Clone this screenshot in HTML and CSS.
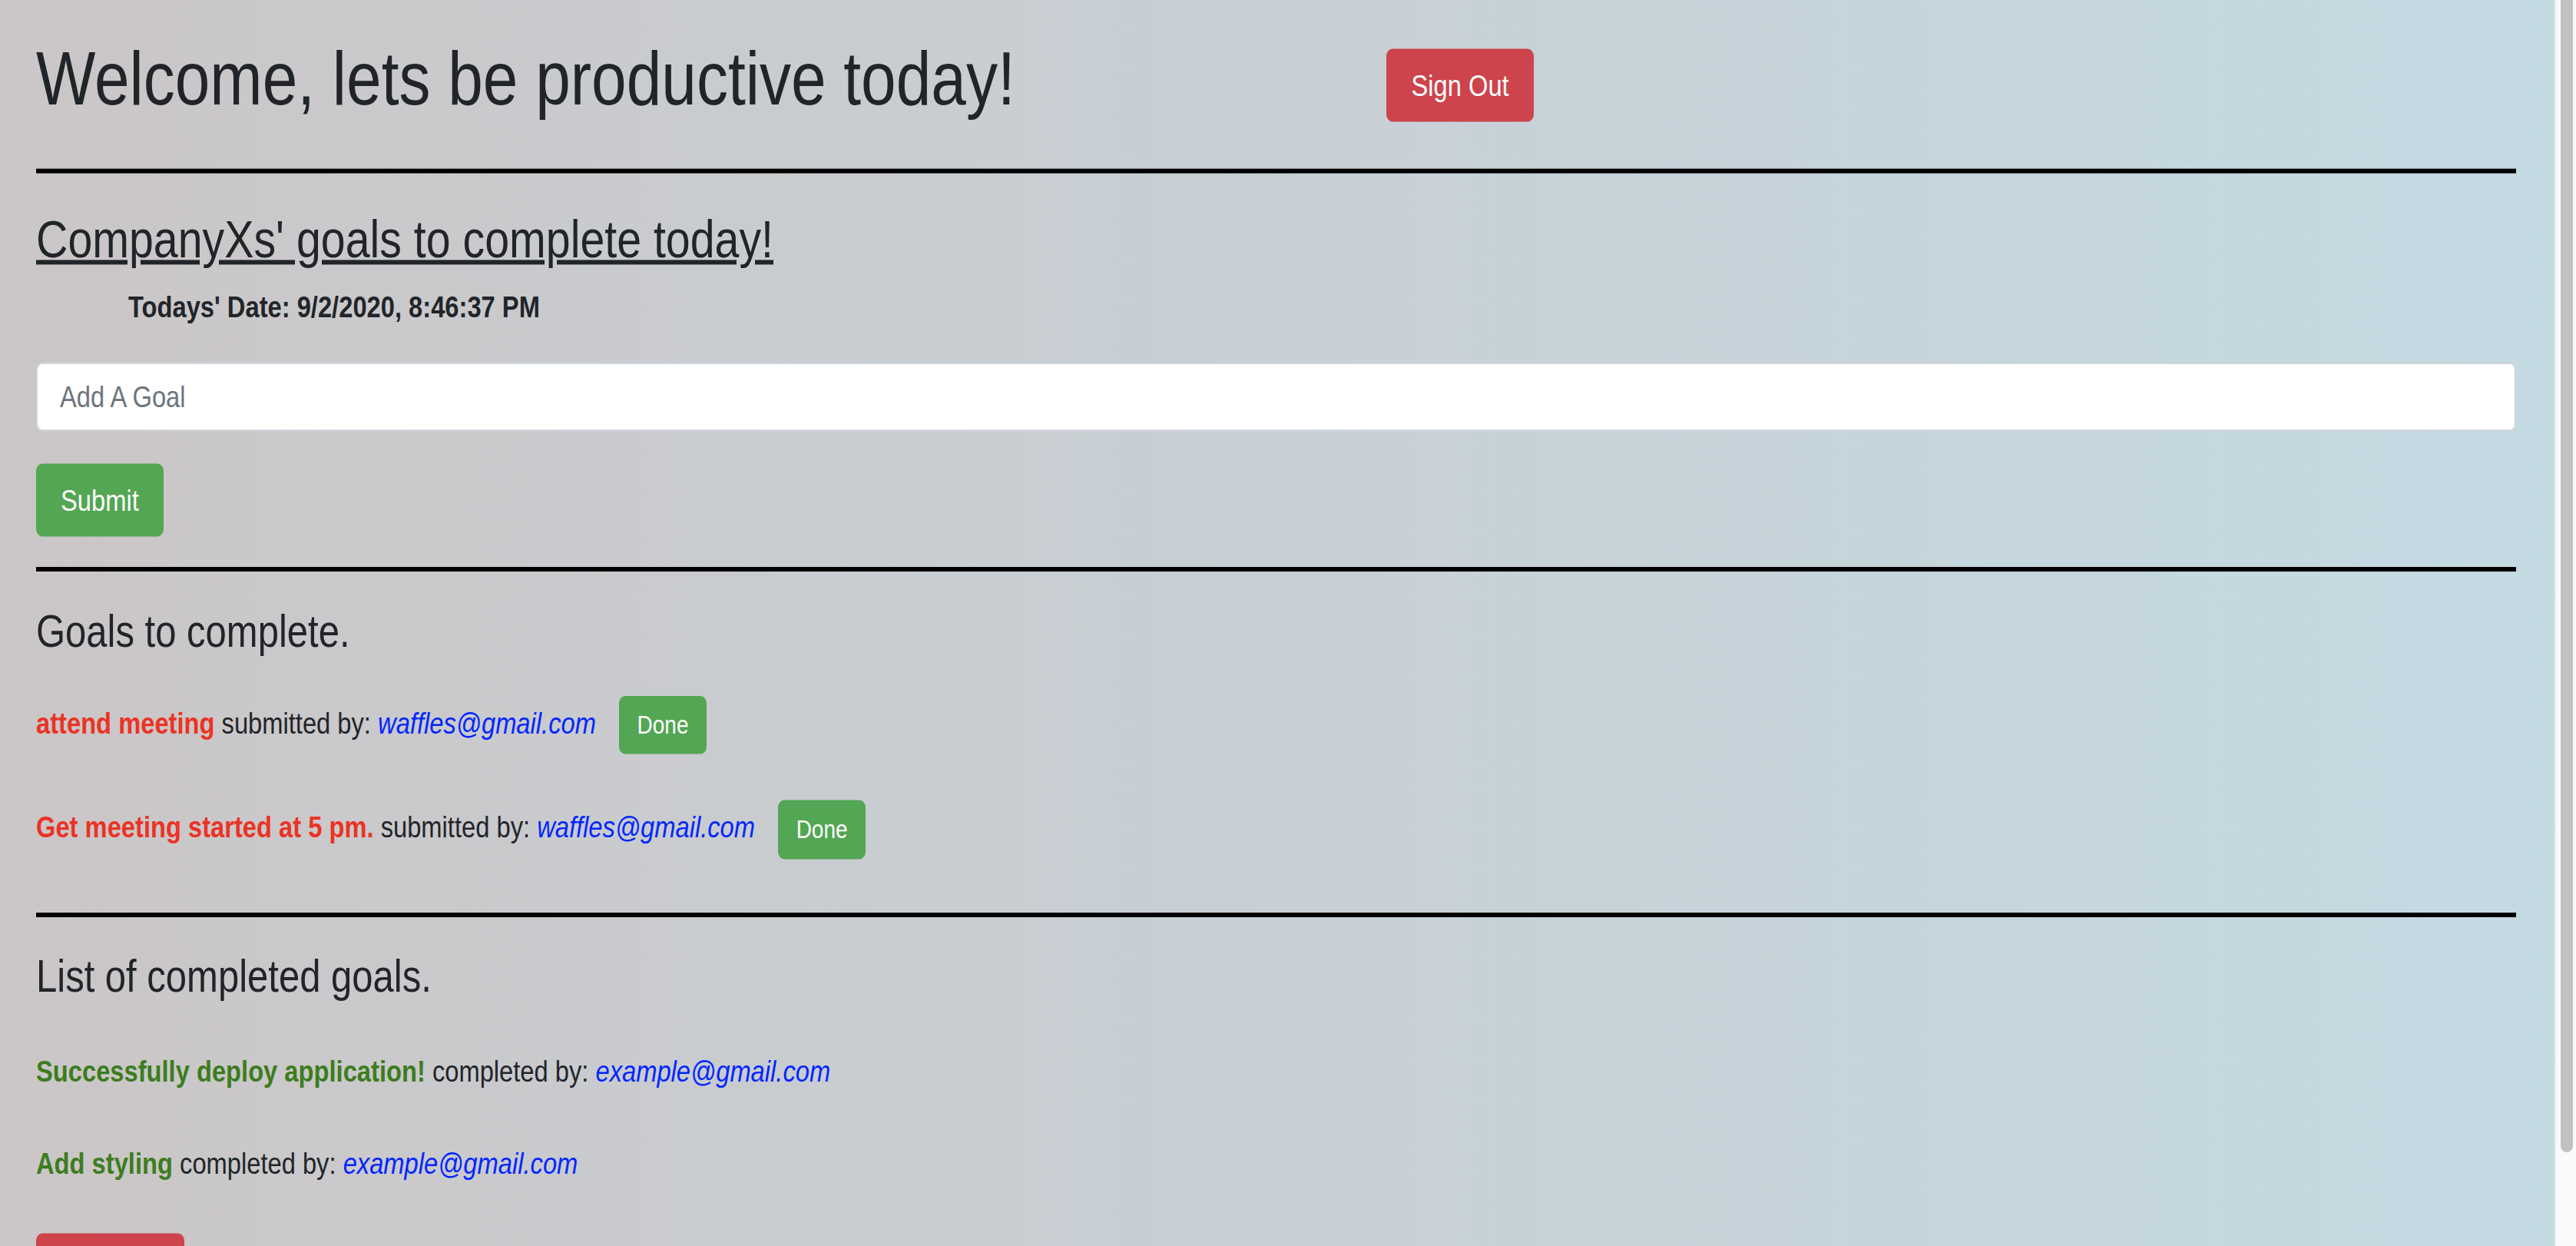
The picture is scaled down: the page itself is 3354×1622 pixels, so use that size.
FILE: index.html
```html
<!DOCTYPE html>
<html lang="en">
<head>
<meta charset="utf-8">
<title>Goals</title>
<link rel="stylesheet" href="styles.css">
</head>
<body>
<div class="page">
  <header class="top-bar">
    <h1 class="welcome">Welcome, lets be productive today!</h1>
    <button class="btn btn-danger btn-signout" type="button">Sign Out</button>
  </header>
  <hr class="rule rule-top">
  <h3 class="company-title">CompanyXs' goals to complete today!</h3>
  <p class="today">Todays' Date: 9/2/2020, 8:46:37 PM</p>
  <form class="goal-form">
    <input class="goal-input" type="text" placeholder="Add A Goal">
    <button class="btn btn-success btn-submit" type="button">Submit</button>
  </form>
  <hr class="rule rule-mid">
  <h4 class="section-title section-todo">Goals to complete.</h4>
  <p class="goal goal-first"><strong class="goal-todo">attend meeting</strong> submitted by: <em class="goal-email">waffles@gmail.com</em> <button class="btn btn-success btn-done" type="button">Done</button></p>
  <p class="goal goal-second"><strong class="goal-todo">Get meeting started at 5 pm.</strong> submitted by: <em class="goal-email">waffles@gmail.com</em> <button class="btn btn-success btn-done" type="button">Done</button></p>
  <hr class="rule rule-bottom">
  <h4 class="section-title section-done">List of completed goals.</h4>
  <p class="goal done-first"><strong class="goal-finished">Successfully deploy application!</strong> completed by: <em class="goal-email">example@gmail.com</em></p>
  <p class="goal done-second"><strong class="goal-finished">Add styling</strong> completed by: <em class="goal-email">example@gmail.com</em></p>
  <button class="btn btn-danger btn-clear" type="button">Clear All</button>
</div>
<div class="scrollbar"><div class="scrollbar-thumb"></div></div>
</body>
</html>
```

FILE: styles.css
```css
html {
  scrollbar-width: none;
}
html::-webkit-scrollbar {
  display: none;
}
body {
  margin: 0;
  font-family: "Liberation Sans", Arial, Helvetica, sans-serif;
  color: #212529;
  background: linear-gradient(to right, #cbc6c7 0%, #c4dae3 100%);
  min-height: 100vh;
}
.page {
  padding: 36px 78px 44px 47px;
  transform: scaleY(1.2);
  transform-origin: 0 0;
}
.top-bar {
  display: flex;
  align-items: flex-start;
}
.welcome {
  flex: 0 0 1758px;
  margin: 0;
  font-size: 82px;
  font-weight: 400;
  line-height: 98px;
}
.btn {
  border: 0;
  font-family: inherit;
  color: #fff;
  cursor: pointer;
  border-radius: 8px;
}
.btn-danger {
  background: #cd444c;
}
.btn-success {
  background: #53a653;
}
.btn-signout {
  margin-top: 16.5px;
  font-size: 32.7px;
  line-height: 49px;
  padding: 15px 32.5px;
}
.rule {
  border: 0;
  border-top: 5px solid #000;
  height: 0;
  margin: 0;
}
.rule-top {
  margin-top: 49.3px;
}
.company-title {
  margin: 37px 0 0;
  font-size: 57.3px;
  font-weight: 400;
  line-height: 68.4px;
  text-decoration: underline;
}
.today {
  margin: 14.6px 0 0 120px;
  font-size: 32.7px;
  font-weight: 700;
  line-height: 49px;
}
.goal-form {
  margin: 36px 0 0;
  display: flex;
  flex-direction: column;
  align-items: flex-start;
  gap: 35px;
}
.goal-input {
  box-sizing: border-box;
  width: 100%;
  height: 75px;
  border: 2px solid #ced4da;
  border-radius: 8px;
  background: #fff;
  padding: 0 29px;
  font-family: inherit;
  font-size: 32.7px;
  color: #495057;
  outline: none;
}
.goal-input::placeholder {
  color: #6c757d;
}
.btn-submit {
  font-size: 32.7px;
  line-height: 49px;
  padding: 14.7px 32px;
}
.rule-mid {
  margin-top: 33.3px;
}
.section-title {
  margin: 0;
  font-size: 49px;
  font-weight: 400;
  line-height: 58.8px;
}
.section-todo {
  margin-top: 36px;
}
.goal {
  margin: 0;
  font-size: 32.7px;
  line-height: 49px;
}
.goal-todo {
  color: #ea3324;
  font-weight: 700;
}
.goal-finished {
  color: #3c7d1e;
  font-weight: 700;
}
.goal-email {
  color: #0026ff;
  font-style: italic;
}
.btn-done {
  margin-left: 21px;
  font-size: 28px;
  line-height: 42px;
  padding: 10.65px 23.5px;
  vertical-align: baseline;
}
.goal-first {
  margin-top: 40.2px;
}
.goal-second {
  margin-top: 50px;
}
.rule-bottom {
  margin-top: 58.4px;
}
.section-done {
  margin-top: 35.3px;
}
.done-first {
  margin-top: 48.4px;
}
.done-second {
  margin-top: 51px;
}
.btn-clear {
  display: block;
  margin-top: 51.8px;
  font-size: 32.7px;
  line-height: 49px;
  padding: 15px 35.7px;
}
.scrollbar {
  position: fixed;
  top: 0;
  right: 0;
  width: 26px;
  height: 100vh;
  background: #fafafa;
  border-left: 2px solid #ececec;
}
.scrollbar-thumb {
  width: 16px;
  height: 1500px;
  margin-left: 6px;
  background: #c1c1c1;
  border-radius: 0 0 8px 8px;
}
```
